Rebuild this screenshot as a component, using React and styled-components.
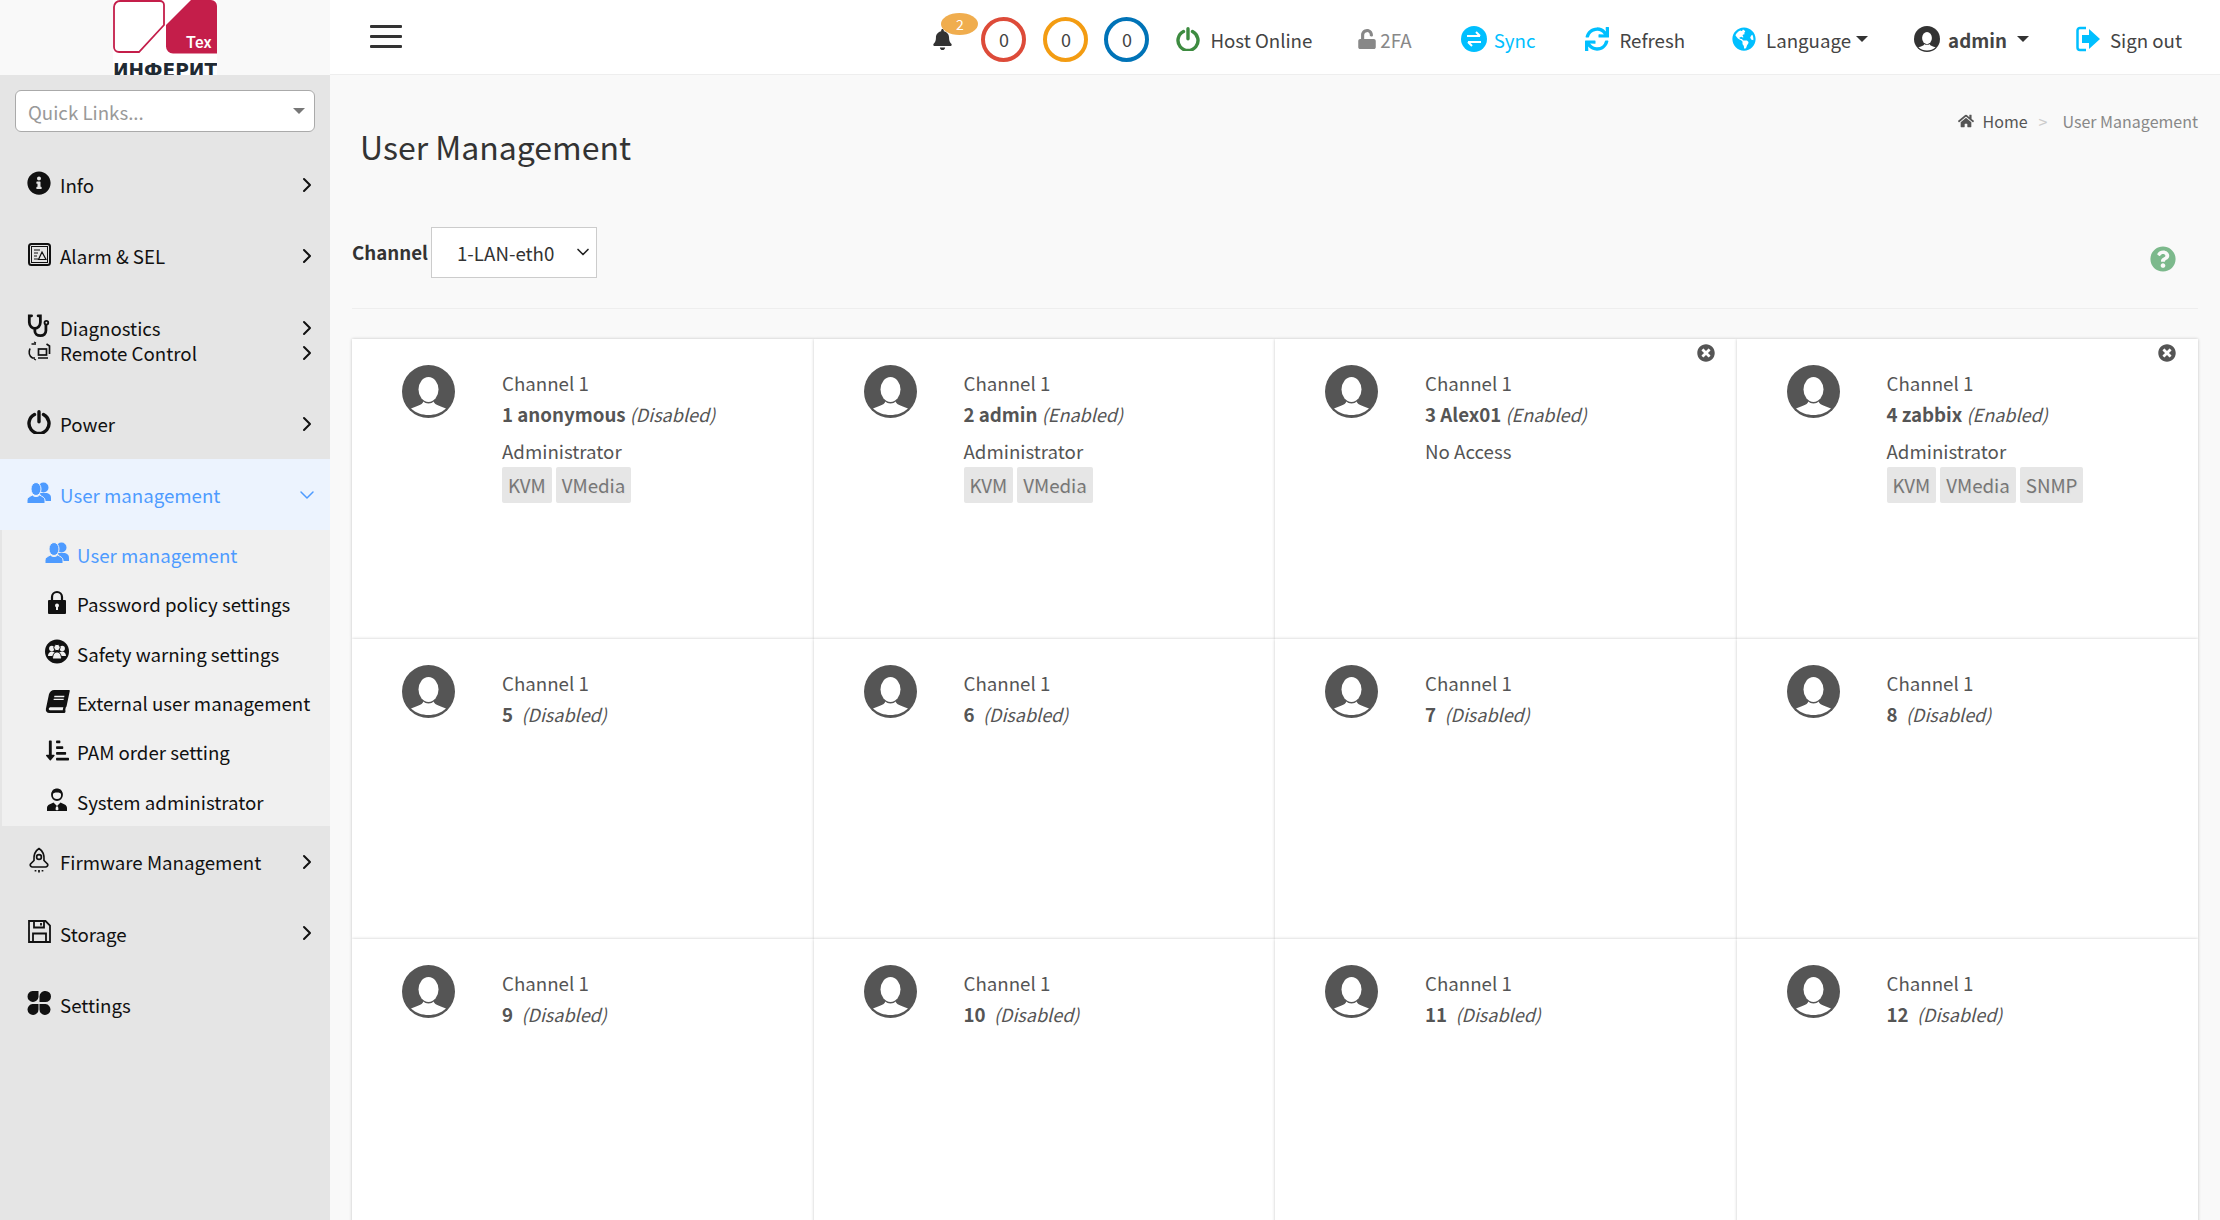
import React from 'react';
import styled, { createGlobalStyle } from 'styled-components';
import {
  FaInfoCircle, FaSortAmountDownAlt, FaBell, FaUnlock,
  FaSync, FaGlobeAmericas, FaHome, FaQuestionCircle, FaTimesCircle, FaBook,
} from 'react-icons/fa';
import { LuChevronRight, LuChevronDown } from 'react-icons/lu';

const GlobalStyle = createGlobalStyle`
  html, body {
    margin: 0;
    padding: 0;
    background: #f9f9f9;
  }
  body {
    font-family: "Noto Sans CJK SC", "Noto Sans", sans-serif;
    font-size: 18.7px;
    color: #555;
    overflow: hidden;
  }
  * { box-sizing: border-box; }
`;

const Shell = styled.div`
  display: grid;
  grid-template-columns: 330px 1fr;
  width: 2220px;
  height: 1220px;
  overflow: hidden;
`;

/* ---------- sidebar ---------- */
const Sidebar = styled.aside`
  background: #e5e5e5;
  display: flex;
  flex-direction: column;
`;

const LogoBox = styled.div`
  height: 75px;
  flex: none;
  background: #f9f9f9;
  display: flex;
  justify-content: center;
  overflow: hidden;
`;

const LogoInner = styled.div`
  width: 104px;
  height: 75px;
  background: #fff;
  overflow: hidden;
  display: flex;
  flex-direction: column;
  svg { flex: none; }
`;

const LogoWord = styled.div`
  font-family: "DejaVu Sans", sans-serif;
  font-weight: 700;
  font-size: 20px;
  line-height: 22px;
  color: #1f2a33;
  white-space: nowrap;
  margin-top: 5px;
  display: flex;
  justify-content: center;
  transform: scaleX(0.93);
`;

const LogoTex = styled.text`
  font-family: Roboto, sans-serif;
  font-size: 16px;
  font-weight: 500;
  fill: #fff;
`;

const QuickWrap = styled.div`
  padding: 15px 15px 17px;
`;

const QuickLinks = styled.div`
  height: 42px;
  background: #fff;
  border: 1px solid #aaa;
  border-radius: 6px;
  padding: 0 9px 0 12px;
  display: flex;
  align-items: center;
  justify-content: space-between;
  color: #999;
`;

const Caret = styled.span`
  width: 0;
  height: 0;
  border-left: ${({ $size }) => $size || 6}px solid transparent;
  border-right: ${({ $size }) => $size || 6}px solid transparent;
  border-top: ${({ $size }) => $size || 6}px solid ${({ $color }) => $color || '#777'};
  margin-left: ${({ $ml }) => $ml || 0}px;
  display: inline-block;
`;

const NavRow = styled.div`
  display: grid;
  grid-template-columns: 24px 1fr 24px;
  align-items: center;
  column-gap: 9px;
  height: ${({ $tight, $h }) => ($tight === 'top' ? 49 : $tight ? 48 : $h || 71)}px;
  padding: ${({ $tight }) => ($tight === 'top' ? '24px 11px 0 27px' : $tight === 'bottom' ? '0 11px 23px 27px' : '0 11px 0 27px')};
  color: ${({ $active }) => ($active ? '#4e9bff' : '#111')};
  background: ${({ $active }) => ($active ? '#ecf3fe' : 'transparent')};
  line-height: 25px;
`;

const NavIcon = styled.span`
  display: flex;
  align-items: center;
  justify-content: center;
  width: 24px;
  height: 24px;
  font-size: 24px;
  margin-top: -3px;
`;

const SubPanel = styled.div`
  background: #f0f0f0;
  margin-left: 2px;
`;

const SubRow = styled.div`
  display: grid;
  grid-template-columns: 24px 1fr;
  align-items: center;
  column-gap: 8px;
  height: 49.3px;
  padding-left: 43px;
  color: ${({ $active }) => ($active ? '#4e9bff' : '#111')};
  white-space: nowrap;
`;

const SubIcon = styled.span`
  display: flex;
  align-items: center;
  justify-content: center;
  width: 24px;
  height: 24px;
  font-size: 23px;
  margin-top: -3px;
`;

/* ---------- top bar ---------- */
const Main = styled.main`
  display: flex;
  flex-direction: column;
  min-width: 0;
`;

const TopBar = styled.header`
  height: 75px;
  flex: none;
  background: #fff;
  border-bottom: 1px solid #eee;
  display: flex;
  align-items: center;
  padding: 4px 38px 0 40px;
`;

const Burger = styled.div`
  width: 32px;
  display: flex;
  flex-direction: column;
  gap: 7px;
  margin-top: -5px;
  span {
    height: 3px;
    background: #333;
    border-radius: 1px;
  }
`;

const TopRight = styled.div`
  margin-left: auto;
  display: flex;
  align-items: center;
`;

const BellWrap = styled.div`
  position: relative;
  font-size: 21px;
  color: #333;
  display: flex;
  margin: 0 28px 0 0;
`;

const Badge = styled.span`
  position: absolute;
  top: -16px;
  left: 9px;
  width: 37px;
  height: 22px;
  border-radius: 50%;
  background: #f0ad4e;
  color: #fff;
  font-size: 14px;
  line-height: 22px;
  text-align: center;
`;

const Ring = styled.div`
  width: 45px;
  height: 45px;
  border-radius: 50%;
  border: 4px solid ${({ $color }) => $color};
  margin-right: ${({ $mr }) => $mr}px;
  display: flex;
  align-items: center;
  justify-content: center;
  font-size: 18px;
  color: #444;
  background: #fff;
`;

const TopItem = styled.div`
  display: flex;
  align-items: center;
  gap: ${({ $gap }) => $gap || 10}px;
  margin-right: ${({ $mr }) => $mr || 0}px;
  color: ${({ $color }) => $color || '#444'};
  font-weight: ${({ $bold }) => ($bold ? 700 : 400)};
  white-space: nowrap;
`;

const TopIcon = styled.span`
  display: flex;
  font-size: ${({ $size }) => $size || 24}px;
  color: ${({ $color }) => $color || '#00bfff'};
`;

/* ---------- content ---------- */
const Content = styled.div`
  flex: 1;
  padding: 0 22px;
  min-height: 0;
`;

const TitleRow = styled.div`
  display: flex;
  justify-content: space-between;
  height: 152px;
`;

const Title = styled.h1`
  margin: 46px 0 0 8px;
  font-size: 32px;
  line-height: 50px;
  font-weight: 400;
  color: #333;
`;

const Crumbs = styled.div`
  display: flex;
  align-items: center;
  height: 22px;
  margin-top: 35px;
  font-size: 16px;
  color: #555;
  white-space: nowrap;
`;

const CrumbSep = styled.span`
  color: #ccc;
  margin: 0 15px 0 11px;
`;

const CrumbCurrent = styled.span`
  color: #888;
`;

const ChannelRow = styled.div`
  display: flex;
  align-items: flex-start;
  height: 82px;
  border-bottom: 1px solid #eee;
`;

const ChannelLabel = styled.label`
  font-weight: 700;
  color: #333;
  line-height: 50px;
  margin-right: 3px;
`;

const SelectWrap = styled.div`
  position: relative;
  width: 166px;
  height: 51px;
  svg {
    position: absolute;
    right: 4px;
    top: 15px;
    pointer-events: none;
    color: #222;
  }
`;

const ChannelSelect = styled.select`
  appearance: none;
  width: 100%;
  height: 100%;
  border: 1px solid #ccc;
  background: #fff;
  font-family: inherit;
  font-size: 18.7px;
  color: #333;
  padding-left: 25px;
  border-radius: 0;
`;

const Help = styled.span`
  margin: 19px 22px 0 auto;
  font-size: 26px;
  display: flex;
  color: #7cb98c;
`;

const UserGrid = styled.div`
  display: grid;
  grid-template-columns: repeat(4, 1fr);
  grid-auto-rows: 300px;
  margin-top: 30px;
`;

const Card = styled.div`
  position: relative;
  background: #fff;
  box-shadow: 0 0 3px rgba(0, 0, 0, 0.22);
  display: flex;
  padding: 26px 0 0 50px;
`;

const Avatar = styled.svg`
  width: ${({ $size }) => $size || 53}px;
  height: ${({ $size }) => $size || 53}px;
  flex: none;
`;

const CardBody = styled.div`
  margin-left: 47px;
  padding-top: 3px;
  color: #555;
  line-height: 30.5px;
`;

const Status = styled.i`
  font-size: 18px;
`;

const Role = styled.div`
  margin-top: 7px;
`;

const Tags = styled.div`
  display: flex;
  gap: 4px;
`;

const Tag = styled.span`
  background: #e6e6e6;
  color: #777;
  border-radius: 2px;
  padding: 0 6px;
  line-height: 36px;
  height: 36px;
  text-shadow: 1px 1px 1px #ddd;
`;

const CloseBtn = styled.span`
  position: absolute;
  top: 5px;
  right: 22px;
  font-size: 18px;
  display: flex;
  color: #555;
`;

/* ---------- drawn icons ---------- */
const Logo = () => (
  <svg width="104" height="54" viewBox="0 0 104 54">
    <path d="M7 1h40a4 4 0 0 1 4 4v20L26 52H6a5 5 0 0 1-5-5V7a6 6 0 0 1 6-6z" fill="#fff" stroke="#c41e4a" strokeWidth="1.8" />
    <path d="M53 25 L78 0 H98 A6 6 0 0 1 104 6 V53.5 H60 A7 7 0 0 1 53 46.5 Z" fill="#c41e4a" />
    <LogoTex x="73" y="48">Tex</LogoTex>
  </svg>
);

const AlarmIcon = () => (
  <svg width="23" height="23" viewBox="0 0 23 23" fill="none" stroke="#111">
    <rect x="1" y="1" width="21" height="21" rx="2.5" strokeWidth="2" />
    <rect x="3.5" y="3.5" width="16" height="16" strokeWidth="1" />
    <path d="M6 7h6M6 10h4M6 13h3M6 16h4" strokeWidth="1.2" />
    <path d="M14 9l4 7.5h-7.5z" strokeWidth="1.2" />
  </svg>
);

const StethIcon = () => (
  <svg width="26" height="26" viewBox="0 0 26 26" fill="none" stroke="#111" strokeWidth="3" strokeLinecap="round">
    <path d="M5 2H2.500v7c0 4 3 6.500 6 6.500s6-2.500 6-6.500V2H12" />
    <path d="M8.500 16v2.500c0 3 2.500 5 6 5s6-2 6-5.500V12" />
    <circle cx="21" cy="9.500" r="2" strokeWidth="2" />
  </svg>
);

const RemoteIcon = () => (
  <svg width="24" height="20" viewBox="0 0 24 20" fill="none" stroke="#111" strokeWidth="1.7">
    <path d="M9 3H4.500M3 7.500C1.500 11 2 15 5.500 17H8" />
    <path d="M9 2l-2-1M7 18l2 1" strokeWidth="1.2" />
    <rect x="11.500" y="8" width="8" height="6" />
    <path d="M11 17h10M22.500 13V5l-3-2" />
  </svg>
);

const PowerIcon = ({ color = '#111', size = 24 }) => (
  <svg width={size} height={size} viewBox="0 0 24 24" fill="none" stroke={color} strokeWidth="3.4" strokeLinecap="round">
    <path d="M7.500 4.500a10 10 0 1 0 9 0" />
    <path d="M12 1.700v10" />
  </svg>
);

const UsersIcon = ({ bg }) => (
  <svg width="24" height="22" viewBox="0 0 24 22" fill="currentColor">
    <circle cx="16.500" cy="5.500" r="5" />
    <path d="M13 11h7c2.500 1 4 2 4 4.500V19h-9z" />
    <ellipse cx="9" cy="7" rx="5" ry="6.500" stroke={bg} strokeWidth="1" />
    <path d="M0 21.500v-3.500c0-2.500 3-3.500 5.500-5 1.500 2 5.500 2 7 0 2.500 1.500 5.500 2.500 5.500 5v3.500z" stroke={bg} strokeWidth="1" />
  </svg>
);

const LockIcon = () => (
  <svg width="20" height="24" viewBox="0 0 20 24">
    <path d="M5 11V7a5 5 0 0 1 10 0v4" fill="none" stroke="#111" strokeWidth="2.2" />
    <rect x="1" y="10" width="18" height="14" rx="1" fill="#111" />
    <circle cx="10" cy="15.500" r="2" fill="#f0f0f0" />
    <rect x="9" y="16" width="2" height="4" fill="#f0f0f0" />
  </svg>
);

const SafetyIcon = () => (
  <svg width="25" height="25" viewBox="0 0 24 24">
    <circle cx="12" cy="12" r="12" fill="#111" />
    <circle cx="6.800" cy="9" r="2.700" fill="#f0f0f0" />
    <circle cx="17.200" cy="9" r="2.700" fill="#f0f0f0" />
    <path d="M3 16.500c0-3 2-4.500 3.800-4.500s3 1 3.500 2h3.400c.5-1 1.700-2 3.500-2s3.800 1.500 3.800 4.500z" fill="#f0f0f0" />
    <circle cx="12" cy="8" r="3.200" fill="#f0f0f0" stroke="#111" />
    <path d="M7.500 19.500c0-4.500 2-7 4.500-7s4.500 2.500 4.500 7z" fill="#f0f0f0" stroke="#111" />
  </svg>
);

const AdminIcon = () => (
  <svg width="20" height="23" viewBox="0 0 20 23">
    <circle cx="10" cy="7" r="5" fill="none" stroke="#111" strokeWidth="1.8" />
    <path d="M4.500 7C4 2.500 7 .5 10 .5s6 2 5.500 6.500C14 5 12 4.500 10 4.500S6 5 4.500 7z" fill="#111" />
    <path d="M0 23v-3c0-3.500 4-4 6.500-5.500L10 18l3.500-3.500C16 16 20 16.500 20 20v3z" fill="#111" />
    <path d="M9 18.500h2l.5 3-1.500 1-1.500-1z" fill="#f0f0f0" />
  </svg>
);

const RocketIcon = () => (
  <svg width="22" height="26" viewBox="0 0 22 26" fill="none" stroke="#111" strokeWidth="1.7" strokeLinejoin="round">
    <path d="M11 1.500c4 2.500 5.500 6.500 5 12l3.500 3.500c1 1.500-.5 3-2 3H4.500c-1.500 0-3-1.500-2-3L6 13.500c-.5-5.500 1-9.500 5-12z" />
    <circle cx="11" cy="10" r="2.400" />
    <path d="M7.500 23v1.500M11 23v2.500M14.500 23v1.500" />
  </svg>
);

const FloppyIcon = () => (
  <svg width="23" height="23" viewBox="0 0 23 23" fill="none" stroke="#111" strokeWidth="1.8">
    <path d="M1 1h16.500L22 5.500V22H1z" />
    <path d="M6 1v6.500h10V1M13 3v2.500" />
    <path d="M5 22v-8.500h13V22" />
  </svg>
);

const CloversIcon = () => (
  <svg width="24" height="24" viewBox="0 0 24 24" fill="#111">
    <path d="M5.500 0h6v6a5.500 5.500 0 1 1-6-6z" />
    <path d="M18.500 0a5.500 5.500 0 0 1 0 11h-6V5.500A5.500 5.500 0 0 1 18.500 0z" />
    <path d="M5.500 13h6v5.500A5.500 5.500 0 1 1 5.500 13z" />
    <path d="M12.500 13h6a5.500 5.500 0 1 1-6 5.500z" />
  </svg>
);

const SyncIcon = () => (
  <svg width="26" height="26" viewBox="0 0 26 26">
    <circle cx="13" cy="13" r="13" fill="#00bfff" />
    <path d="M6 10h13M15 6l4 4M20 16H7M11 20l-4-4" fill="none" stroke="#fff" strokeWidth="2" />
  </svg>
);

const SignOutIcon = () => (
  <svg width="25" height="26" viewBox="0 0 25 26">
    <path d="M10 2H4a2.500 2.500 0 0 0-2.500 2.500v17A2.500 2.500 0 0 0 4 24h6" fill="none" stroke="#00bfff" strokeWidth="2.5" />
    <path d="M6 9h7V3l11 10-11 10v-6H6z" fill="#00bfff" />
  </svg>
);

const UserAvatar = ({ size, color = '#555' }) => (
  <Avatar $size={size} viewBox="0 0 53 53">
    <circle cx="26.500" cy="26.500" r="26.500" fill={color} />
    <ellipse cx="26.500" cy="24.500" rx="10" ry="12.500" fill="#fff" />
    <path d="M9 43.500C14 41 20 40.500 21.500 36.500c1.500 2.500 8.500 2.500 10 0C33 40.500 39 41 44 43.500 39 48 33 50 26.500 50S14 48 9 43.500z" fill="#fff" />
  </Avatar>
);

const topNav = [
  { label: 'Info', icon: <FaInfoCircle /> },
  { label: 'Alarm & SEL', icon: <AlarmIcon /> },
  { label: 'Diagnostics', icon: <StethIcon />, tight: 'top' },
  { label: 'Remote Control', icon: <RemoteIcon />, tight: 'bottom' },
  { label: 'Power', icon: <PowerIcon /> },
];

const subNav = [
  { label: 'User management', icon: <UsersIcon bg="#f0f0f0" />, active: true },
  { label: 'Password policy settings', icon: <LockIcon /> },
  { label: 'Safety warning settings', icon: <SafetyIcon /> },
  { label: 'External user management', icon: <FaBook style={{ transform: 'skewX(-12deg)' }} /> },
  { label: 'PAM order setting', icon: <FaSortAmountDownAlt /> },
  { label: 'System administrator', icon: <AdminIcon /> },
];

const bottomNav = [
  { label: 'Firmware Management', icon: <RocketIcon />, arrow: true },
  { label: 'Storage', icon: <FloppyIcon />, arrow: true },
  { label: 'Settings', icon: <CloversIcon /> },
];

const users = [
  { id: 1, name: 'anonymous', status: 'Disabled', role: 'Administrator', tags: ['KVM', 'VMedia'] },
  { id: 2, name: 'admin', status: 'Enabled', role: 'Administrator', tags: ['KVM', 'VMedia'] },
  { id: 3, name: 'Alex01', status: 'Enabled', role: 'No Access', tags: [], removable: true },
  { id: 4, name: 'zabbix', status: 'Enabled', role: 'Administrator', tags: ['KVM', 'VMedia', 'SNMP'], removable: true },
  ...[5, 6, 7, 8, 9, 10, 11, 12].map((id) => ({ id, status: 'Disabled' })),
];

const NavItem = ({ item, active, open, height }) => (
  <NavRow $active={active} $tight={item.tight} $h={height}>
    <NavIcon>{item.icon}</NavIcon>
    <span>{item.label}</span>
    {open ? <LuChevronDown size={24} strokeWidth={1.5} /> : item.arrow !== false && <LuChevronRight size={24} />}
  </NavRow>
);

const App = () => (
  <Shell>
    <GlobalStyle />
    <Sidebar>
      <LogoBox>
        <LogoInner>
          <Logo />
          <LogoWord>ИНФЕРИТ</LogoWord>
        </LogoInner>
      </LogoBox>
      <QuickWrap>
        <QuickLinks>
          Quick Links...
          <Caret />
        </QuickLinks>
      </QuickWrap>
      {topNav.map((item) => (
        <NavItem key={item.label} item={item} />
      ))}
      <NavItem item={{ label: 'User management', icon: <UsersIcon bg="#ecf3fe" /> }} active open />
      <SubPanel>
        {subNav.map((item) => (
          <SubRow key={item.label} $active={item.active}>
            <SubIcon>{item.icon}</SubIcon>
            <span>{item.label}</span>
          </SubRow>
        ))}
      </SubPanel>
      {bottomNav.map((item) => (
        <NavItem key={item.label} item={{ arrow: false, ...item }} height={71.5} />
      ))}
    </Sidebar>

    <Main>
      <TopBar>
        <Burger><span /><span /><span /></Burger>
        <TopRight>
          <BellWrap>
            <FaBell />
            <Badge>2</Badge>
          </BellWrap>
          <Ring $color="#dd4b39" $mr={17}>0</Ring>
          <Ring $color="#f39c12" $mr={16}>0</Ring>
          <Ring $color="#0073b7" $mr={27}>0</Ring>
          <TopItem $mr={45}>
            <PowerIcon color="#3d8b40" />
            Host Online
          </TopItem>
          <TopItem $mr={49} $gap={3} $color="#888">
            <TopIcon $size={20} $color="#888"><FaUnlock /></TopIcon>
            2FA
          </TopItem>
          <TopItem $mr={50} $gap={7} $color="#00bfff">
            <SyncIcon />
            Sync
          </TopItem>
          <TopItem $mr={47}>
            <TopIcon><FaSync /></TopIcon>
            Refresh
          </TopItem>
          <TopItem $mr={46}>
            <TopIcon><FaGlobeAmericas /></TopIcon>
            Language
            <Caret $color="#333" $ml={-5} />
          </TopItem>
          <TopItem $mr={47} $gap={8} $bold>
            <UserAvatar size={26} color="#333" />
            admin
            <Caret $color="#333" $ml={2} />
          </TopItem>
          <TopItem $gap={9}>
            <SignOutIcon />
            Sign out
          </TopItem>
        </TopRight>
      </TopBar>

      <Content>
        <TitleRow>
          <Title>User Management</Title>
          <Crumbs>
            <FaHome style={{ marginRight: 9 }} />
            Home
            <CrumbSep>&gt;</CrumbSep>
            <CrumbCurrent>User Management</CrumbCurrent>
          </Crumbs>
        </TitleRow>
        <ChannelRow>
          <ChannelLabel>Channel</ChannelLabel>
          <SelectWrap>
            <ChannelSelect defaultValue="1-LAN-eth0">
              <option>1-LAN-eth0</option>
            </ChannelSelect>
            <LuChevronDown size={20} strokeWidth={2} />
          </SelectWrap>
          <Help><FaQuestionCircle /></Help>
        </ChannelRow>
        <UserGrid>
          {users.map((u) => (
            <Card key={u.id}>
              <UserAvatar />
              <CardBody>
                <div>Channel 1</div>
                <div>
                  <b>{u.id}{u.name ? ' ' + u.name : ''}</b>
                  {u.name ? ' ' : '\u00a0\u00a0'}
                  <Status>({u.status})</Status>
                </div>
                {u.role && <Role>{u.role}</Role>}
                {u.tags && u.tags.length > 0 && (
                  <Tags>
                    {u.tags.map((t) => <Tag key={t}>{t}</Tag>)}
                  </Tags>
                )}
              </CardBody>
              {u.removable && <CloseBtn><FaTimesCircle /></CloseBtn>}
            </Card>
          ))}
        </UserGrid>
      </Content>
    </Main>
  </Shell>
);

export default App;
